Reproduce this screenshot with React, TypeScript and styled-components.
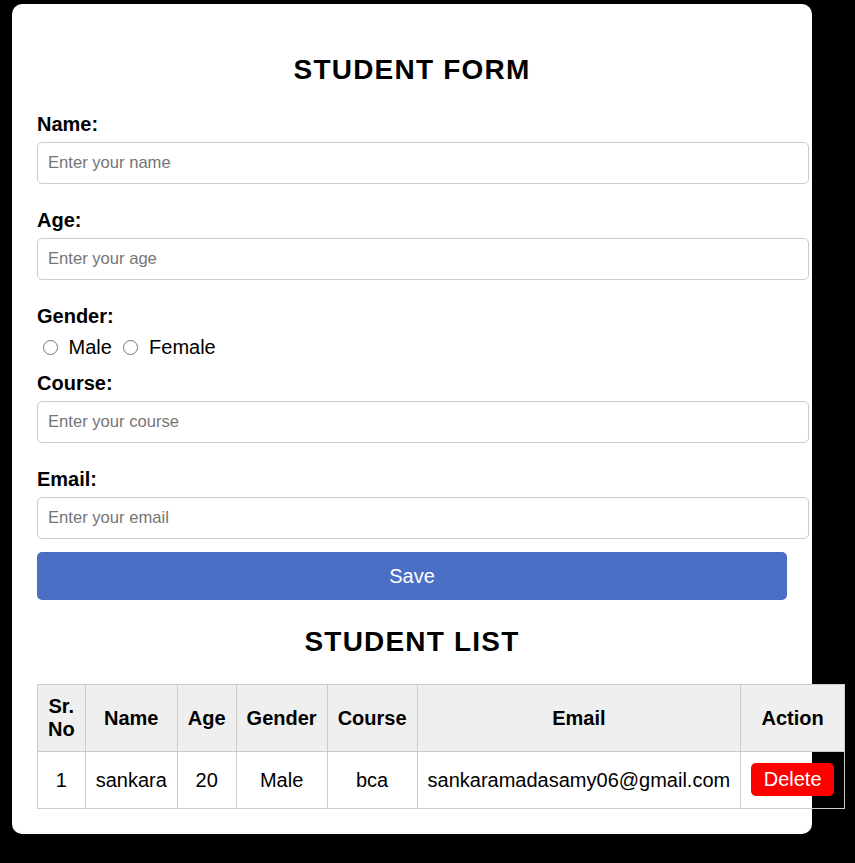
import React from 'react';
import styled, { createGlobalStyle } from 'styled-components';

const GlobalStyle = createGlobalStyle`
  body {
    margin: 0;
    padding: 4px 12px;
    background-color: #000;
    font-family: "Liberation Sans", Arial, sans-serif;
  }
`;

const Card = styled.div`
  width: 750px;
  padding: 24px 25px 25px;
  background-color: #fff;
  border-radius: 10px;
`;

const Heading = styled.h2<{ $bottom?: number }>`
  margin: 25px 0 ${(p) => p.$bottom ?? 25}px;
  font-size: 28px;
  line-height: 33.5px;
  letter-spacing: 1.2px;
  text-align: center;
  color: #000;
`;

const Form = styled.form`
  display: flex;
  flex-direction: column;
`;

const Label = styled.label<{ $first?: boolean }>`
  display: block;
  margin: ${(p) => (p.$first ? '0' : '12px')} 0 6px;
  font-size: 20px;
  line-height: 24px;
  font-weight: bold;
  color: #000;
`;

const Input = styled.input`
  display: block;
  width: 100%;
  margin: 0 0 12px;
  padding: 10px;
  font-family: inherit;
  font-size: 16.6px;
  border: 1px solid #ccc;
  border-radius: 5px;
  outline: none;

  &::placeholder {
    color: #757575;
  }
`;

const RadioRow = styled.div`
  margin-top: 1px;
  font-size: 20px;
  line-height: 24px;
  color: #000;
`;

const Radio = styled.input.attrs({ type: 'radio' })`
  width: 15px;
  height: 15px;
  margin: 3px 5px 0 6px;
  vertical-align: -1px;
`;

const SaveButton = styled.button`
  width: 100%;
  margin-top: 1px;
  padding: 12px;
  font-family: inherit;
  font-size: 20px;
  line-height: 24px;
  color: #fff;
  background-color: #4a6fc4;
  border: none;
  border-radius: 5px;
  cursor: pointer;
`;

const Table = styled.table`
  width: 100%;
  border-collapse: collapse;
  font-size: 20px;
`;

const Th = styled.th`
  padding: 10px;
  background-color: #efefef;
  border: 1px solid #ccc;
  text-align: center;
`;

const Td = styled.td`
  padding: 10px;
  border: 1px solid #ccc;
  text-align: center;
`;

const DeleteButton = styled.button`
  margin: 1px 0 2px;
  padding: 5px 12.5px;
  font-family: inherit;
  font-size: 20px;
  color: #fff;
  background-color: #ff0000;
  border: none;
  border-radius: 5px;
  cursor: pointer;
`;

const students = [
  { name: 'sankara', age: 20, gender: 'Male', course: 'bca', email: 'sankaramadasamy06@gmail.com' },
];

const App: React.FC = () => {
  return (
    <>
      <GlobalStyle />
      <Card>
        <Heading>STUDENT FORM</Heading>
        <Form onSubmit={(e) => e.preventDefault()}>
          <Label $first htmlFor="name">Name:</Label>
          <Input id="name" type="text" placeholder="Enter your name" />

          <Label htmlFor="age">Age:</Label>
          <Input id="age" type="number" placeholder="Enter your age" />

          <Label>Gender:</Label>
          <RadioRow>
            <Radio name="gender" id="male" /> <label htmlFor="male">Male</label>{' '}
            <Radio name="gender" id="female" /> <label htmlFor="female">Female</label>
          </RadioRow>

          <Label htmlFor="course">Course:</Label>
          <Input id="course" type="text" placeholder="Enter your course" />

          <Label htmlFor="email">Email:</Label>
          <Input id="email" type="email" placeholder="Enter your email" />

          <SaveButton type="submit">Save</SaveButton>
        </Form>

        <Heading $bottom={26}>STUDENT LIST</Heading>
        <Table>
          <thead>
            <tr>
              <Th>Sr. No</Th>
              <Th>Name</Th>
              <Th>Age</Th>
              <Th>Gender</Th>
              <Th>Course</Th>
              <Th>Email</Th>
              <Th>Action</Th>
            </tr>
          </thead>
          <tbody>
            {students.map((s, i) => (
              <tr key={s.email}>
                <Td>{i + 1}</Td>
                <Td>{s.name}</Td>
                <Td>{s.age}</Td>
                <Td>{s.gender}</Td>
                <Td>{s.course}</Td>
                <Td>{s.email}</Td>
                <Td>
                  <DeleteButton>Delete</DeleteButton>
                </Td>
              </tr>
            ))}
          </tbody>
        </Table>
      </Card>
    </>
  );
};

export default App;
